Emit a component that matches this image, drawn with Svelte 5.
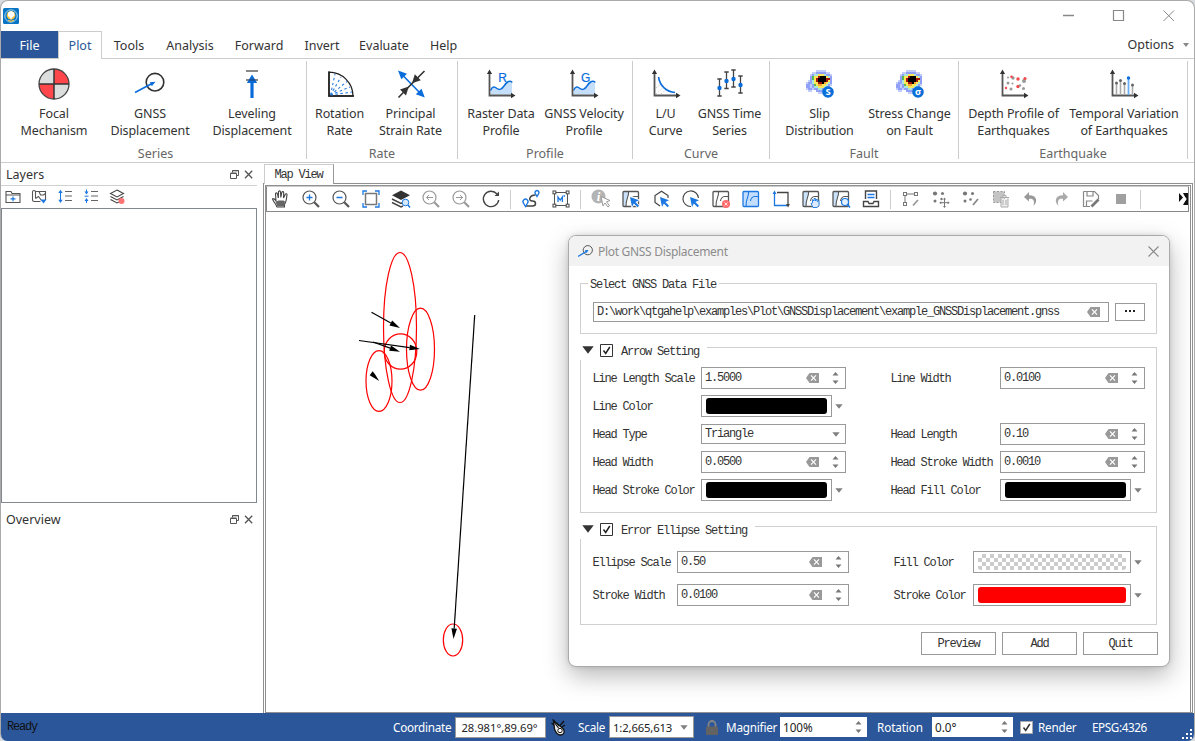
<script>
  const axes = '<path d="M4.500 5V27.500H27" fill="none" stroke="#555" stroke-width="1.800"/><path d="M4.500 1.500l2.600 4.500h-5.200zM30.500 27.500l-4.500 2.700v-5.400z" fill="#333"/>';
  const heatRows = [
    '.....ppppp....',
    '...ppbbbbbpp..',
    '..pbccyyycbbp.',
    '..bgyyrkkkycb.',
    '..bgyrkkkkrrb.',
    '.pbcyrkkkkryb.',
    'pbbcyyrrkoycb.',
    'bbpbgyooyycbp.',
    'bbpbccyyycbb..',
    'pbbpbbccbbbp..',
    '.pp..bbbbpp...',
    '......ppp.....'
  ];
  const heatColors = { p: '#c3cdfa', b: '#8fa0f6', c: '#a8e8da', g: '#55b956', y: '#fbe95a', o: '#f7a531', r: '#a5170d', k: '#000' };
  const heat = '<g shape-rendering="crispEdges">' + heatRows
    .map((row, y) => [...row].map((c, x) => (c === '.' ? '' : `<rect x="${2 + x * 2}" y="${2 + y * 2}" width="2" height="2" fill="${heatColors[c]}"/>`)).join(''))
    .join('') + '</g>';
  const wave = '<path d="M5.500 23.500c2-5 4-5 6.500-2.500s5 1 7-2 5-7 8-3.500V26.500H5.500z" fill="#c5dffa"/><path d="M5.500 22.500c2-4.500 4-4 6.500-2s5 .5 7-2.500 5-6.500 8.300-3.500" fill="none" stroke="#0a6cdb" stroke-width="1.500"/>';
  const letter = (t) => `<text x="17.500" y="13.500" text-anchor="middle" font-family="Liberation Sans, sans-serif" font-size="12" fill="#0a6cdb" stroke="#0a6cdb" stroke-width=".2">${t}</text>`;
  const badge = (t) => `<circle cx="24" cy="24" r="5.800" fill="#0a6ed8"/><text x="24" y="27.200" text-anchor="middle" font-family="Noto Sans, sans-serif" font-weight="700" font-size="9.500" fill="#fff">${t}</text>`;

  const big = {
    focal: '<circle cx="16" cy="16" r="15" fill="#dcdddd"/><path d="M16 1a15 15 0 0 1 15 15H16zM16 16v15a15 15 0 0 1-15-15z" fill="#ff474b"/><circle cx="16" cy="16" r="15" fill="none" stroke="#444" stroke-width="1.300"/><path d="M16 1v30M1 16h30" stroke="#333" stroke-width="1.500"/>',
    gnss: '<circle cx="21" cy="14.200" r="8.800" fill="none" stroke="#333" stroke-width="1.600"/><path d="M1 24.500L18 15.500" stroke="#0a6cdb" stroke-width="1.600"/><path d="M21.500 13.700l-3.700 4.600-2-4z" fill="#0a6cdb"/>',
    level: '<path d="M10 3h12M10 12h12" stroke="#888" stroke-width="1.900"/><path d="M16 30V11" stroke="#0a6cdb" stroke-width="3.200"/><path d="M16 6.500l5.200 8.500H10.800z" fill="#0a6cdb"/><path d="M13 12h6" stroke="#234a78" stroke-width="1.500"/>',
    rotation: '<path d="M5 4.200A24 24 0 0 1 29 28H5z" fill="none" stroke="#222" stroke-width="1.300"/><path d="M5 3.500V28h25" fill="none" stroke="#222" stroke-width="1.600"/><path d="M6.500 27L11 6M6.500 27L17 9M6.500 27L23 13.500M6.500 27L26 19M6.500 27L28 24" stroke="#2b7de0" stroke-width="1.100" stroke-dasharray="2.500 2.500"/>',
    strain: '<path d="M6 5.500L27 27" stroke="#0a6cdb" stroke-width="1.600"/><path d="M3 2.500l9 3.200-5.700 5.600zM29.800 29.500l-9-3.200 5.700-5.600z" fill="#0a6cdb"/><path d="M29.500 3L16.500 16 3.500 29.500" stroke="#333" stroke-width="1.600"/><path d="M17 15.300l2.800-9 6 6zM13.800 18.500l-2.800 9-6-6z" fill="#333"/>',
    raster: wave + axes + letter('R'),
    velocity: wave + axes + letter('G'),
    lu: '<path d="M6 26l9-8M11 26l7-6M6 20l5-4" stroke="#ccc" stroke-dasharray="1.500 1.500"/>' + axes + '<path d="M8.500 9c1.500 9 8 15 16.500 15.500" fill="none" stroke="#0a6cdb" stroke-width="1.600"/>',
    series: [[5.5, 11, 28, 20], [12.5, 4, 20.500, 13], [19.5, 2, 19, 11], [26.5, 8, 25, 17]]
      .map(([x, a, b, d]) => `<path d="M${x} ${a}V${b}M${x - 2.200} ${a}h4.400M${x - 2.200} ${b}h4.400" stroke="#444" stroke-width="1.300"/><circle cx="${x}" cy="${d}" r="2.200" fill="#0a6cdb"/>`).join(''),
    slip: heat + badge('S'),
    stress: heat + badge('σ'),
    depth: axes + [[10, 9.5, 1, 0], [15, 10, 1.700, 0], [13.500, 8.800, 1.300, 1], [20, 11, 1.700, 1], [26, 13, 2, 0], [27, 10.500, 1.600, 1], [10, 15, 1.500, 0], [14.500, 15.500, 1, 0], [8, 20, 1.200, 1], [13, 21, 1.500, 0], [20, 18.500, 1.700, 1], [22, 17.500, 1.200, 0], [25.500, 20.500, 1.500, 0]]
      .map(([x, y, r, red]) => `<circle cx="${x}" cy="${y}" r="${r}" fill="${red ? '#f0494c' : '#999'}"/>`).join(''),
    temporal: axes + [[8.5, 15], [12.5, 12.5], [16.5, 15.5], [24.5, 17]]
      .map(([x, y]) => `<path d="M${x} ${y}V27" stroke="#aaa" stroke-width="1.600"/><circle cx="${x}" cy="${y}" r="1.500" fill="#666"/>`).join('') + '<path d="M20.500 10v17" stroke="#6aaef5" stroke-width="1.800"/><circle cx="20.500" cy="10" r="1.700" fill="#0a6cdb"/>'
  };

  const groups = [
    { name: 'Series', w: 306, pl: 7, items: [['focal', 92, 'Focal', 'Mechanism'], ['gnss', 100, 'GNSS', 'Displacement'], ['level', 104, 'Leveling', 'Displacement']] },
    { name: 'Rate', w: 151, pl: 4, items: [['rotation', 57, 'Rotation', 'Rate'], ['strain', 85, 'Principal', 'Strain Rate']] },
    { name: 'Profile', w: 175, pl: 3, items: [['raster', 80, 'Raster Data', 'Profile'], ['velocity', 86, 'GNSS Velocity', 'Profile']] },
    { name: 'Curve', w: 137, pl: 7, items: [['lu', 51, 'L/U', 'Curve'], ['series', 77, 'GNSS Time', 'Series']] },
    { name: 'Fault', w: 189, pl: 8, items: [['slip', 83, 'Slip', 'Distribution'], ['stress', 97, 'Stress Change', 'on Fault']] },
    { name: 'Earthquake', w: 229, pl: 5, items: [['depth', 99, 'Depth Profile of', 'Earthquakes'], ['temporal', 122, 'Temporal Variation', 'of Earthquakes']] }
  ];

  const K = '#555', B = '#1c78e0', G = '#999';
  const cursor = (c = B) => `<path d="M9 8l9 3.200-3.600 1.800 3.600 3.800-1.400 1.400-3.800-3.800L11 18z" fill="#fff" stroke="#fff" stroke-width="1.600"/><path d="M9 8l9 3.200-3.600 1.800 3.600 3.800-1.400 1.400-3.800-3.800L11 18z" fill="${c}"/>`;
  const sheet = (c, f, g = '#fff') => `<rect x="2" y="2.500" width="15.500" height="15" rx="1" fill="${g}"/><path d="M2 2.500h5.500v2c0 3-2.500 6-2.500 13H2z" fill="${f}"/><rect x="2" y="2.500" width="15.500" height="15" rx="1" fill="none" stroke="${c}" stroke-width="1.300"/><path d="M7.500 2.500v2c0 3-2.500 5-2.500 13M17 7.500h-3.500c-2 0-4 2.500-4 4.500" fill="none" stroke="${c}" stroke-width="1.100"/>`;
  const glass = (c, inner) => `<circle cx="8.500" cy="8.500" r="6.500" fill="none" stroke="${c}" stroke-width="1.200"/><path d="M13.300 13.300l4.700 4.700" stroke="${c}" stroke-width="2.200"/>${inner}`;
  const redDot = '<circle cx="15" cy="15" r="4" fill="#ff6b6b"/><path d="M13.500 13.500l3 3m0-3l-3 3" stroke="#fff" stroke-width=".8"/>';
  const tool = {
    hand: '<path d="M6 18c-1-3-3.500-5-4.500-8 1-1 2.500.5 3.500 2L4.500 5c0-1.500 1.700-1.500 2 0l.8 4L7.500 3c0-1.500 2-1.500 2 0l.3 5.500 1-5c.3-1.500 2-1 1.900.3L12.500 9l1.700-3.600c.7-1.200 2.100-.5 1.800.8-.6 3-.5 7-2.500 9V18z" fill="#fff" stroke="#444" stroke-width="1.100"/><path d="M6.500 17.500l-2-4.500 3-1.500h5l1.500 1-1 5z" fill="#666"/>',
    zin: glass(K, `<path d="M5.500 8.500h6M8.500 5.500v6" stroke="${B}" stroke-width="1.300"/>`),
    zout: glass(K, `<path d="M5.500 8.500h6" stroke="${B}" stroke-width="1.500"/>`),
    full: `<rect x="4.500" y="4.500" width="11" height="11" fill="none" stroke="#777" stroke-width="1.500"/><path d="M2 6V2h4M14 2h4v4M18 14v4h-4M6 18H2v-4" fill="none" stroke="${B}" stroke-width="1.300"/>`,
    zlayer: `<path d="M10 1.500l9 4.700-9 4.800L1 6.200z" fill="#333"/><path d="M1 10l9 4.500 4-2M1 13.500l9 4.500 2-1" fill="none" stroke="#444" stroke-width="1.400"/><circle cx="14.500" cy="13.500" r="3.300" fill="#d6e9fc" stroke="${B}"/><path d="M17 16l2 2.500" stroke="${B}" stroke-width="1.500"/>`,
    prev: glass(G, `<path d="M12 8.500H5.500M8 6L5.500 8.500 8 11" fill="none" stroke="${G}"/>`),
    next: glass(G, `<path d="M5 8.500h6.500M9 6l2.500 2.500L9 11" fill="none" stroke="${G}"/>`),
    refresh: '<path d="M16 5A7.700 7.700 0 1 0 17.700 11" fill="none" stroke="#444" stroke-width="1.400"/><path d="M18 2.500v4.500h-4.500z" fill="#444"/>',
    route: `<path d="M4.500 17h7c4 0 4-5 0-5-5 0-3-6 3-6" fill="none" stroke="#444" stroke-width="1.500"/><path d="M4.500 17.500L2.400 14a2.500 2.500 0 1 1 4.200 0zM16 7.500L14.300 4.700a2 2 0 1 1 3.400 0z" fill="#fff" stroke="${B}" stroke-width="1.400"/>`,
    area: `<rect x="3.500" y="3.500" width="13" height="13" fill="none" stroke="#555"/><g fill="#fff" stroke="#555" stroke-width="1.100"><rect x="2" y="2" width="2.800" height="2.800"/><rect x="15.200" y="2" width="2.800" height="2.800"/><rect x="2" y="15.200" width="2.800" height="2.800"/><rect x="15.200" y="15.200" width="2.800" height="2.800"/></g><path d="M7 13V8l2.200 3.200L11.400 8V13M12.500 7h1.500" fill="none" stroke="${B}" stroke-width="1.300"/>`,
    info: '<circle cx="7.500" cy="7.500" r="7" fill="#b4b4b4"/><text x="7.500" y="12" text-anchor="middle" font-family="Liberation Serif, serif" font-style="italic" font-weight="700" font-size="13" fill="#fff">i</text><path d="M10 7.500l9 4-3.500 1.300 3 4-1.500 1.200-3-4-2 3z" fill="#fff" stroke="#999"/>',
    selrect: sheet(K, '#cbe2fb') + cursor(),
    selpoly: `<path d="M17 9V6.500l-6.500-4.200L4 6.500v7l5 3.500" fill="none" stroke="#444" stroke-width="1.200"/>` + cursor(),
    selcirc: `<path d="M17.500 9A7.800 7.800 0 1 0 10 17.500" fill="none" stroke="#444" stroke-width="1.100"/>` + cursor(),
    desel: sheet(K, '#fff') + redDot,
    selall: sheet(B, '#c3defc', '#c3defc'),
    inv: `<path d="M3.500 4v12.500H16" fill="none" stroke="${B}" stroke-width="1.300"/><path d="M6 3.500h11V16" fill="none" stroke="#444" stroke-width="1.300"/><path d="M3.500 1.500l2 3.500h-4z" fill="${B}"/><path d="M17 18.500l-2-3.500h4z" fill="#444"/>`,
    pansel: sheet(K, '#cbe2fb') + `<path d="M12 18.500l-2-4 1.500-.5V10.500l1.500 1.500V9.500h1.500V12l1.500-2 .3 2.500L18 11.500V16.500l-2 2z" fill="#dbeafc" stroke="${B}" stroke-width=".9"/>`,
    zsel: sheet(K, '#cbe2fb') + `<circle cx="14" cy="13" r="3.500" fill="#e4f0fd" stroke="${B}" stroke-width="1.200"/><path d="M16.500 15.500l2.500 3" stroke="${B}" stroke-width="1.500"/>`,
    table: `<path d="M4.500 10V2h11v8M2.500 12.500h4.500l1 2h4l1-2h4.500v5h-15z" fill="none" stroke="#444" stroke-width="1.400"/><path d="M6.500 5.500h7M6.500 8.500h7" stroke="${B}" stroke-width="1.400"/>`,
    vert: '<g fill="#fff" stroke="#777"><path d="M5 5h9M4 6v10" fill="none"/><rect x="2.500" y="3.500" width="3" height="3"/><rect x="13.500" y="3.500" width="3" height="3"/><rect x="2.500" y="13.500" width="3" height="3"/></g><path d="M17 11l-5 5.500" stroke="#999" stroke-width="1.800"/>',
    addpt: '<g fill="#777"><circle cx="4" cy="4.500" r="2.100"/><circle cx="11.500" cy="4.500" r="1.500"/><circle cx="4" cy="12" r="1.500"/><circle cx="10.500" cy="10" r="1.200"/></g><path d="M13.500 9.500v8.500M9.200 13.700h8.600" stroke="#777"/><path d="M13.500 8.500l1.500 2h-3zM13.500 19l1.500-2h-3zM8.300 13.700l2-1.500v3zM18.700 13.700l-2-1.500v3z" fill="#777"/>',
    editpt: '<g fill="#777"><circle cx="4" cy="4.500" r="2.100"/><circle cx="11.500" cy="4.500" r="1.500"/><circle cx="4" cy="12" r="1.500"/><circle cx="9.500" cy="10.500" r="1.300"/></g><path d="M17 10l-5 6" stroke="#888" stroke-width="1.800"/>',
    del: '<rect x="2.500" y="2.500" width="11" height="11" fill="#c4c4c4" stroke="#999" stroke-dasharray="2 1.500"/><path d="M9 8.500h9M10 9.500v8.500h7V9.500M12 11v5M15 11v5M12 8v-1.500h3V8" fill="#eee" stroke="#aaa"/>',
    undo: '<path d="M8 3L3 8 8 12.500v-2.700c4-.8 6 1.500 4.500 7 4.500-4 3.500-10.700-4.500-10.600z" fill="#999"/>',
    redo: '<path d="M12 3l5 5-5 4.500V9.800c-4-.8-6 1.500-4.500 7-4.500-4-3.500-10.700 4.500-10.600z" fill="#aaa"/>',
    save: '<path d="M2.500 2.500h11l4 4v4M2.500 2.500v15H9M6 2.500V7h6V2.500M5.500 17v-5h6" fill="none" stroke="#888" stroke-width="1.200"/><path d="M17.500 10.500l-7 7" stroke="#777" stroke-width="2.600"/>',
    stop: '<rect x="5" y="5" width="10" height="10" fill="#a0a0a0"/>'
  };
  const toolbar = ['hand', 'zin', 'zout', 'full', 'zlayer', 'prev', 'next', 'refresh', '|', 'route', 'area', '|', 'info', 'selrect', 'selpoly', 'selcirc', 'desel', 'selall', 'inv', 'pansel', 'zsel', 'table', '|', 'vert', 'addpt', 'editpt', 'del', 'undo', 'redo', 'save', 'stop', '|'];

  const list = (a) => `<path d="M8 2.500h7M8 7h7M8 11.500h7" stroke="#666" stroke-width="1.200"/>${a}`;
  const layerTools = [
    `<path d="M1 13.500v-11h5l1 2h8v9zM1 6h14" fill="none" stroke="#555" stroke-width="1.100"/><path d="M5.500 9.800h5M8 7.500v4.800" stroke="${B}" stroke-width="1.200"/>`,
    `<path d="M5 12.500H3a1.800 1.800 0 0 1-1.500-2V3a1.500 1.500 0 0 1 3 0v6.500M4.500 2.500h10v8.500M8 2.500l1.500 3.500h3l2-1.500M4.500 12.500h5M4.500 9.500l3-2 3 4" fill="none" stroke="#555" stroke-width="1.100"/><path d="M9.500 10.500h6l-3 4z" fill="${B}"/>`,
    list(`<path d="M3.500 3v9" stroke="${B}"/><path d="M3.500 .8L5.700 4H1.300zM3.500 14l2.200-3.200H1.300z" fill="${B}"/>`),
    list(`<path d="M3.500 5.500L5.500 2.500h-4zM3.500 9l2 3h-4z" fill="${B}"/><path d="M1.500 7.200h4M3.500 .5v3M3.500 11v3" stroke="${B}"/>`),
    '<path d="M8 1l6.500 3.500L8 8 1.500 4.500zM1.500 7.500L8 11l6.500-3.500M1.500 10.500L8 14l2-1" fill="none" stroke="#444" stroke-width="1.100"/><circle cx="12.500" cy="12" r="3" fill="#ff7474"/>'
  ];

  const ellipses = [[400, 327.5, 16.5, 75], [420.5, 349.2, 14, 41], [400.5, 351.5, 16.300, 17.700], [379, 381, 13, 30.300], [453, 640, 9.700, 16]];
  const arrows = [[371.5, 312.300, 400, 328], [359, 340.500, 420, 349], [373, 342, 400, 351.700], [474.700, 315, 453.500, 639]].map(([x1, y1, x2, y2]) => {
    const a = Math.atan2(y2 - y1, x2 - x1), dx = Math.cos(a), dy = Math.sin(a), bx = x2 - dx * 10.5, by = y2 - dy * 10.5;
    return { x1, y1, x2: bx, y2: by, pts: `${x2},${y2} ${bx - dy * 2.8},${by + dx * 2.8} ${bx + dy * 2.8},${by - dx * 2.8}` };
  });

  const arrowRows = [
    [['Line Length Scale', 'spin', '1.5000'], ['Line Width', 'spin', '0.0100']],
    [['Line Color', 'color', 'black'], null],
    [['Head Type', 'combo', 'Triangle'], ['Head Length', 'spin', '0.10']],
    [['Head Width', 'spin', '0.0500'], ['Head Stroke Width', 'spin', '0.0010']],
    [['Head Stroke Color', 'color', 'black'], ['Head Fill Color', 'color', 'black']]
  ];
  const ellipseRows = [
    [['Ellipse Scale', 'spin', '0.50'], ['Fill Color', 'color', 'checker']],
    [['Stroke Width', 'spin', '0.0100'], ['Stroke Color', 'color', 'red']]
  ];
</script>

{#snippet clear()}
  <svg class="clear" width="13" height="10" viewBox="0 0 13 10"><path d="M3.500 0H13v10H3.500L0 5z" fill="#999" /><path d="M5 2.300l5 5.400M10 2.300L5 7.700" stroke="#fff" stroke-width="1.200" /></svg>
{/snippet}
{#snippet updown()}
  <svg class="updown" width="7" height="14" viewBox="0 0 7 14"><path d="M3.500 1l3 3.500h-6zM3.500 13l3-3.500h-6z" fill="#777" /></svg>
{/snippet}
{#snippet down()}
  <svg width="8" height="5" viewBox="0 0 8 5"><path d="M.3 .3h7.400L4 4.700z" fill="#808080" /></svg>
{/snippet}
{#snippet field(f)}
  {#if f}
    <span class="lab">{f[0]}</span>
    {#if f[1] === 'spin'}
      <div class="box spin"><span>{f[2]}</span>{@render clear()}{@render updown()}</div>
    {:else if f[1] === 'combo'}
      <div class="box combo"><span>{f[2]}</span>{@render down()}</div>
    {:else}
      <div class="color"><div class="box well"><i class={f[2]}></i></div>{@render down()}</div>
    {/if}
  {:else}<span></span><span></span>{/if}
{/snippet}
{#snippet dockTitle(name)}
  <div class="dock-title">
    <span>{name}</span>
    <svg width="23" height="9" viewBox="0 0 23 9" fill="none" stroke="#555"><path d="M2.500 2.500v-2h6v5h-2M.5 3.500h6v5h-6zM.5 3h6M2.500 .8h6" /><path d="M15 .8l7.200 7.400M22.200 .8L15 8.200" stroke-width="1.300" /></svg>
  </div>
{/snippet}
{#snippet groupHead(name)}
  <div class="legend">
    <svg width="12" height="8" viewBox="0 0 12 8"><path d="M.3 .3h11.400L6 7.700z" fill="#333" /></svg>
    <svg width="13" height="13" viewBox="0 0 13 13" fill="none"><path d="M.5 .5h12v12H.5z" stroke="#333" /><path d="M3.500 6.500l2.200 3L9.800 3" stroke="#222" stroke-width="1.500" /></svg>
    <span>{name}</span>
  </div>
{/snippet}

<div class="window">
  <header class="titlebar">
    <svg width="16" height="16" viewBox="0 0 16 16"><rect width="16" height="16" rx="1.500" fill="#0874c4" /><circle cx="8" cy="8" r="6.200" fill="none" stroke="#a5d7f2" /><circle cx="8" cy="7.300" r="4.300" fill="#f4c33f" /><path d="M5 4.500l3-1.500 3 1.500.5 3L9 9.500 8 12 7 9.500 5 8z" fill="#fff" /><path d="M5 12.300l3 1 3-1" stroke="#f4c33f" stroke-width="1.200" fill="none" /></svg>
    <svg class="caption" width="112" height="12" viewBox="0 0 112 12" fill="none" stroke="#888"><path d="M0 5.500h11" stroke-width="1.500" /><path d="M50.500 .5h10v10h-10z" stroke-width="1.200" /><path d="M100.500 .5l10.500 10.500M111 .5L100.500 11" /></svg>
  </header>
  <nav class="tabs">
    <span class="file">File</span><span class="active">Plot</span>
    {#each [['Tools', 54], ['Analysis', 68], ['Forward', 70], ['Invert', 56], ['Evaluate', 68], ['Help', 51]] as [t, w]}
      <span style:width="{w}px">{t}</span>
    {/each}
    <span class="options">Options <svg width="6" height="4" viewBox="0 0 6 4"><path d="M0 0h6L3 4z" fill="#888" /></svg></span>
  </nav>
  <section class="ribbon">
    {#each groups as g}
      <div class="group" style:width="{g.w}px">
        <div class="items" style:padding-left="{g.pl}px">
          {#each g.items as it}
            <div class="item" style:width="{it[1]}px">
              <svg width="32" height="32" viewBox="0 0 32 32">{@html big[it[0]]}</svg>
              <span>{it[2]}</span><span>{it[3]}</span>
            </div>
          {/each}
        </div>
        <div class="gname">{g.name}</div>
      </div>
    {/each}
  </section>

  <main>
    <aside>
      {@render dockTitle('Layers')}
      <div class="ltools">
        {#each layerTools as l}<svg width="16" height="16" viewBox="0 0 16 16">{@html l}</svg>{/each}
      </div>
      <div class="tree"></div>
      {@render dockTitle('Overview')}
    </aside>
    <section class="view">
      <div class="maptab">Map View</div>
      <div class="frame">
        <div class="toolbar">
          {#each toolbar as t}
            {#if t === '|'}<i class="sep"></i>{:else}<svg width="20" height="20" viewBox="0 0 20 20">{@html tool[t]}</svg>{/if}
          {/each}
          <svg class="more" width="9" height="12" viewBox="0 0 9 12"><path d="M0 0l4 4.500L0 9zM4 0h5v12H4l3-5.500z" fill="#111" /><path d="M4 2l3 4-3 4" fill="none" stroke="#fff" stroke-width="1.200" /></svg>
        </div>
        <svg class="canvas" viewBox="267 213 924 499" width="924" height="499">
          {#each ellipses as [cx, cy, rx, ry]}<ellipse {cx} {cy} {rx} {ry} fill="none" stroke="#f00" stroke-width="1.200" />{/each}
          {#each arrows as a}
            <line x1={a.x1} y1={a.y1} x2={a.x2} y2={a.y2} stroke="#000" stroke-width="1.200" />
            <polygon points={a.pts} />
          {/each}
          <polygon points="379.2,381 369.7,375.2 371,373.400 372.7,371.2 375,374.2" />
        </svg>
      </div>
    </section>
  </main>

  <footer>
    <span class="ready">Ready</span>
    <span class="s coord">Coordinate</span>
    <div class="sb cbox">28.981°,89.69°</div>
    <svg class="mouse" width="15" height="17" viewBox="0 0 15 17"><path d="M2 .5l3.500 6M13 2L9 6.500M.5 4l4 3M14 6l-3 2" stroke="#111" stroke-width="1.400" /><path d="M2.500 1.500l5 4.500 4 3c3 3 1.500 7-2 7s-5-3-6-6z" fill="#eee" stroke="#111" stroke-width="1.300" /><circle cx="9" cy="11.500" r="2.200" fill="#fff" stroke="#111" /><path d="M3 3l4.500 6M6 4l2 3" stroke="#111" stroke-width="1.200" /></svg>
    <span class="s scale">Scale</span>
    <div class="sb sbox"><span>1:2,665,613</span>{@render down()}</div>
    <svg class="lock" width="12" height="15" viewBox="0 0 12 15"><path d="M2.500 7V4.500a3.500 3.500 0 0 1 7 0V7" fill="none" stroke="#858585" stroke-width="1.800" /><rect y="6.500" width="12" height="8.500" rx="1" fill="#626262" /></svg>
    <span class="s mag">Magnifier</span>
    <div class="sb mbox"><span>100%</span>{@render updown()}</div>
    <span class="s rot">Rotation</span>
    <div class="sb rbox"><span>0.0°</span>{@render updown()}</div>
    <svg class="chk" width="13" height="13" viewBox="0 0 13 13" fill="none"><path d="M.5 .5h12v12H.5z" fill="#fff" stroke="#aaa" /><path d="M3.500 6.500l2.200 3L9.800 3" stroke="#333" stroke-width="1.500" /></svg>
    <span class="s ren">Render</span>
    <span class="s epsg">EPSG:4326</span>
    <svg class="grip" width="11" height="11" viewBox="0 0 11 11" fill="#fff"><path d="M8 0h2v2H8zM4 4h2v2H4zM8 4h2v2H8zM0 8h2v2H0zM4 8h2v2H4zM8 8h2v2H8z" /></svg>
  </footer>

  <div class="dialog">
    <div class="dhead">
      <svg width="15" height="13" viewBox="0 0 15 13" fill="none"><circle cx="9.800" cy="5.200" r="4.600" stroke="#555" /><path d="M0 11.500L9 6" stroke="#1c78e0" stroke-width="1.400" /><path d="M10.500 5l-2 3.200-1.800-2.900z" fill="#1c78e0" /></svg>
      <span>Plot GNSS Displacement</span>
      <svg width="11" height="11" viewBox="0 0 11 11"><path d="M.5 .5l10 10M10.500 .5l-10 10" stroke="#888" stroke-width="1.100" /></svg>
    </div>
    <div class="dbody">
      <div class="gb g1">
        <div class="legend plain"><span>Select GNSS Data File</span></div>
        <div class="filerow">
          <div class="box path"><span>D:\work\qtgahelp\examples\Plot\GNSSDisplacement\example_GNSSDisplacement.gnss</span>{@render clear()}</div>
          <div class="box browse"><i></i><i></i><i></i></div>
        </div>
      </div>
      <div class="gb g2">
        {@render groupHead('Arrow Setting')}
        <div class="grid a">
          {#each arrowRows as r}{@render field(r[0])}{@render field(r[1])}{/each}
        </div>
      </div>
      <div class="gb g3">
        {@render groupHead('Error Ellipse Setting')}
        <div class="grid e">
          {#each ellipseRows as r}{@render field(r[0])}{@render field(r[1])}{/each}
        </div>
      </div>
      <div class="btns"><button>Preview</button><button>Add</button><button>Quit</button></div>
    </div>
  </div>
</div>

<style>
  :global(body) { background: #d9dce0; overflow: hidden; }
  * { box-sizing: border-box; }
  svg { display: block; flex: none; }
  .window { width: 1195px; height: 741px; position: relative; display: flex; flex-direction: column; background: #fff; border: 1px solid #aaa; border-bottom: 0; border-radius: 8px 8px 7px 7px; overflow: hidden; font: 12.5px/17px 'Noto Sans', sans-serif; color: #333; white-space: nowrap; }
  .titlebar { height: 30px; flex: none; display: flex; justify-content: space-between; padding: 7px 19px 0 2px; }
  .caption { margin-top: 2px; }
  .tabs { height: 28px; flex: none; display: flex; border-bottom: 1px solid #ccc; }
  .tabs span { text-align: center; line-height: 29px; height: 28px; }
  .tabs .file { width: 57px; height: 27px; background: #2b579a; color: #fff; }
  .tabs .active { width: 44px; border: 1px solid #ccc; border-bottom: 0; background: #fff; color: #2b579a; line-height: 28px; }
  .tabs .options { margin-left: auto; display: flex; align-items: center; gap: 9px; padding-right: 5px; line-height: 27px; height: 27px; }
  .ribbon { height: 104px; flex: none; display: flex; border-bottom: 1px solid #ccc; }
  .group { border-right: 1px solid #ccc; height: 98px; margin-top: 2px; flex: none; }
  .items { display: flex; height: 84px; }
  .item { display: flex; flex-direction: column; align-items: center; padding-top: 7px; letter-spacing: -.1px; }
  .item svg { margin-bottom: 5px; }
  .gname { text-align: center; color: #666; line-height: 17px; }
  .group:first-child .gname { padding-left: 4px; }
  main { height: 550px; flex: none; display: flex; }
  aside { width: 256px; display: flex; flex-direction: column; }
  .dock-title { height: 23px; border-bottom: 1px solid #d0d0d0; display: flex; align-items: center; justify-content: space-between; padding: 0 4px 0 5px; }
  .ltools { display: flex; gap: 10px; height: 22px; padding: 3px 0 0 4px; }
  .tree { height: 295px; border: 1px solid #828790; margin-bottom: 5px; }
  .tree + .dock-title { border: 0; }
  .view { margin-left: 7px; width: 930px; display: flex; flex-direction: column; }
  .maptab { width: 70px; height: 20px; margin-top: 1px; margin-bottom: -1px; position: relative; border: 1px solid #999; border-left-color: #ccc; border-top-color: #ccc; border-bottom: 0; background: #fff; text-align: center; font: 12px/20px 'Liberation Mono', monospace; letter-spacing: -1.2px; padding-right: 1px; }
  .frame { flex: 1; border: 3px double #909090; border-bottom-width: 1px; margin-left: -1px; margin-right: 1px; }
  .toolbar { height: 26px; border: 1px solid #888; border-top-color: #ccc; display: flex; align-items: center; gap: 10px; padding-left: 4px; margin-right: 1px; }
  .canvas { margin: 1px 0 0 1px; }
  .sep { width: 1px; height: 19px; background: #ccc; margin: 0 0 0 -1px; }
  .toolbar .more { margin-left: auto; margin-right: 0; }
  footer { height: 28px; flex: none; background: #2b579a; color: #fff; display: flex; align-items: center; padding-left: 6px; font-size: 11.7px; }
  .ready { color: #111; width: 386px; font: 12px 'Liberation Mono', monospace; letter-spacing: -1.2px; }
  .sb { flex: none; height: 20px; background: #fff; color: #222; display: flex; align-items: center; justify-content: space-between; padding: 0 5px 0 3px; }
  .s { flex: none; }
  .coord { width: 62px; letter-spacing: -.25px; }
  .cbox { width: 91px; height: 21px; border: 1px solid #999; justify-content: center; font-size: 11.2px; margin-right: 5px; }
  .mouse { margin-right: 12px; }
  .scale { width: 31px; letter-spacing: -.2px; }
  .sbox { width: 85px; height: 22px; border: 1px solid #999; margin-right: 12px; font-size: 11.3px; letter-spacing: -.15px; }
  .lock { margin-right: 8px; }
  .mag { width: 54px; letter-spacing: -.2px; }
  .mbox { width: 87px; margin-right: 10px; }
  .rot { width: 55px; letter-spacing: -.1px; }
  .rbox { width: 81px; margin-right: 7px; }
  .chk { margin-right: 5px; }
  .ren { width: 54px; letter-spacing: -.2px; }
  .epsg { letter-spacing: -.4px; }
  .grip { margin: 14px 1px 0 auto; }

  .dialog { position: absolute; left: 567px; top: 234px; width: 602px; height: 432px; background: #fff; border: 1px solid #aaa; border-radius: 8px; box-shadow: 0 9px 24px rgba(0, 0, 0, .28), 0 0 5px rgba(0, 0, 0, .12); overflow: hidden; font: 12px/16px 'Liberation Mono', monospace; letter-spacing: -1.2px; color: #333; }
  .dhead { height: 30px; background: #f2f2f2; display: flex; align-items: center; gap: 5px; padding: 0 10px 0 9px; font: 12px 'Noto Sans', sans-serif; letter-spacing: -.3px; color: #8c8c8c; }
  .dhead span { flex: 1; }
  .dbody { padding: 17px 11px 0; display: flex; flex-direction: column; }
  .gb { width: 577px; border: 1px solid #d0d0d0; }
  .g1 { height: 51px; margin-bottom: 13px; }
  .g2 { height: 166px; margin-bottom: 13px; }
  .g3 { height: 99px; margin-bottom: 7px; }
  .legend { width: fit-content; height: 18px; margin: -6px 0 0 -2px; padding: 0 8px 0 1px; background: #fff; display: flex; align-items: center; gap: 8px; }
  .legend > svg { margin: -1px 0 1px 2px; }
  .legend > svg + svg { margin: -2px 0 0 -2px; }
  .legend span { padding-top: 1px; }
  .legend.plain { margin: -9px 0 0 7px; padding: 0 3px 0 2px; }
  .box { border: 1px solid #999; background: #fff; display: flex; align-items: center; }
  .filerow { display: flex; align-items: center; gap: 6px; margin: 9px 0 0 12px; }
  .path { width: 516px; height: 20px; padding: 0 8px 0 3px; justify-content: space-between; }
  .browse { width: 30px; height: 18px; justify-content: center; gap: 2px; }
  .browse i { width: 2px; height: 2px; background: #222; margin-top: -2px; }
  .grid { display: grid; align-items: center; padding-left: 12px; }
  .lab { margin-left: -.5px; padding-top: 1px; }
  .a { grid-template-columns: 108px 190px 109px 147px; grid-auto-rows: 28px; margin-top: 4px; }
  .e { grid-template-columns: 84px 217px 79px 172px; grid-auto-rows: 33px; margin-top: 6.5px; }
  .spin { width: 145px; height: 22px; padding: 0 6px 0 3px; }
  .e .spin { width: 172px; }
  .spin .clear { margin-left: auto; margin-right: 13px; }
  .combo { width: 145px; height: 20px; padding: 0 5px 0 3px; justify-content: space-between; }
  .color { display: flex; align-items: center; gap: 3px; }
  .well { width: 131px; height: 22px; padding: 2px 4px; }
  .e .well { width: 158px; }
  .well i { flex: 1; height: 16px; border-radius: 3px; }
  .black { background: #000; }
  .red { background: #f00; }
  .checker { background: repeating-conic-gradient(#ccc 0 25%, #fff 0 50%) 0 0 / 8px 8px; }
  .btns { display: flex; justify-content: flex-end; gap: 6px; }
  button { width: 75px; height: 23px; padding: 1px 0 0; border: 1px solid #999; background: #fff; font: inherit; letter-spacing: inherit; color: #333; }
</style>
